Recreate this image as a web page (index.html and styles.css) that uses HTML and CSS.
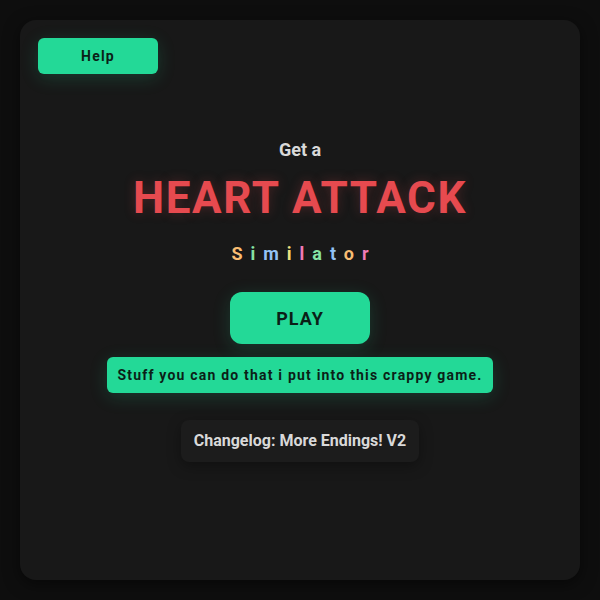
FILE: index.html
```html
<!DOCTYPE html>
<html lang="en">
<head>
    <meta charset="UTF-8">
    <meta name="viewport" content="width=device-width, initial-scale=1.0">
    <title>Heart Attack Similator</title>
    <link rel="stylesheet" href="styles.css">
</head>
<body>
    <div class="game-container">
        <div class="top-bar">
            <button class="btn btn-small">Help</button>
        </div>

        <div class="title-block">
            <p class="pre-title">Get a</p>
            <h1 class="main-title">HEART ATTACK</h1>
            <p class="sub-title">
                <span class="c-orange">S</span><span class="c-green">i</span><span class="c-blue">m</span><span class="c-yellow">i</span><span class="c-pink">l</span><span class="c-green">a</span><span class="c-blue">t</span><span class="c-orange">o</span><span class="c-pink">r</span>
            </p>
        </div>

        <div class="menu">
            <button class="btn btn-play">PLAY</button>
            <button class="btn btn-small btn-wide">Stuff you can do that i put into this crappy game.</button>
            <div class="changelog">Changelog: More Endings! V2</div>
        </div>
    </div>
</body>
</html>
```

FILE: styles.css
```css
:root {
    --bg-color: #0e0e0e;
    --card-color: #181818;
    --accent-color: #23d997;
    --accent-text: #0b1f17;
    --title-red: #e64a4f;
    --text-light: #d9d9d9;
    --font-primary: Roboto, 'Liberation Sans', Arial, sans-serif;
}

* {
    margin: 0;
    padding: 0;
    box-sizing: border-box;
}

body {
    font-family: var(--font-primary);
    background: var(--bg-color);
    padding: 20px;
    color: var(--text-light);
}

.game-container {
    background: var(--card-color);
    border-radius: 16px;
    height: 560px;
    padding: 18px;
    box-shadow: 0 4px 16px rgba(0,0,0,0.5);
}

.top-bar {
    display: flex;
}

.btn {
    font-family: var(--font-primary);
    background: var(--accent-color);
    color: var(--accent-text);
    border: none;
    font-weight: 700;
    cursor: pointer;
    box-shadow: 0 4px 18px rgba(35, 217, 151, 0.18);
}

.btn-small {
    height: 36px;
    border-radius: 6px;
    font-size: 14px;
    letter-spacing: 1.2px;
}

.top-bar .btn-small {
    width: 120px;
}

.title-block {
    text-align: center;
    margin-top: 64px;
}

.pre-title {
    font-size: 18px;
    font-weight: 700;
    line-height: 24px;
}

.main-title {
    color: var(--title-red);
    font-size: 44px;
    font-weight: 700;
    letter-spacing: 1.6px;
    line-height: 52px;
    margin-top: 10px;
    text-shadow: 0 0 12px rgba(230, 74, 79, 0.25);
}

.sub-title {
    font-size: 18px;
    font-weight: 700;
    letter-spacing: 8px;
    line-height: 24px;
    margin-top: 18px;
    padding-left: 8px;
}

.c-orange { color: #f9bd72; }
.c-green { color: #86e3a5; }
.c-blue { color: #93c2f5; }
.c-yellow { color: #f1e07e; }
.c-pink { color: #f27ab8; }

.menu {
    display: flex;
    flex-direction: column;
    align-items: center;
    margin-top: 26px;
}

.btn-play {
    width: 140px;
    height: 52px;
    border-radius: 12px;
    font-size: 18px;
    letter-spacing: 1px;
}

.btn-wide {
    margin-top: 13px;
    padding: 0 10px;
}

.changelog {
    margin-top: 27px;
    padding: 0 13px;
    height: 42px;
    line-height: 42px;
    background: #1c1c1c;
    border-radius: 8px;
    font-size: 16px;
    font-weight: 700;
    box-shadow: 0 4px 14px rgba(0,0,0,0.35);
}
```
